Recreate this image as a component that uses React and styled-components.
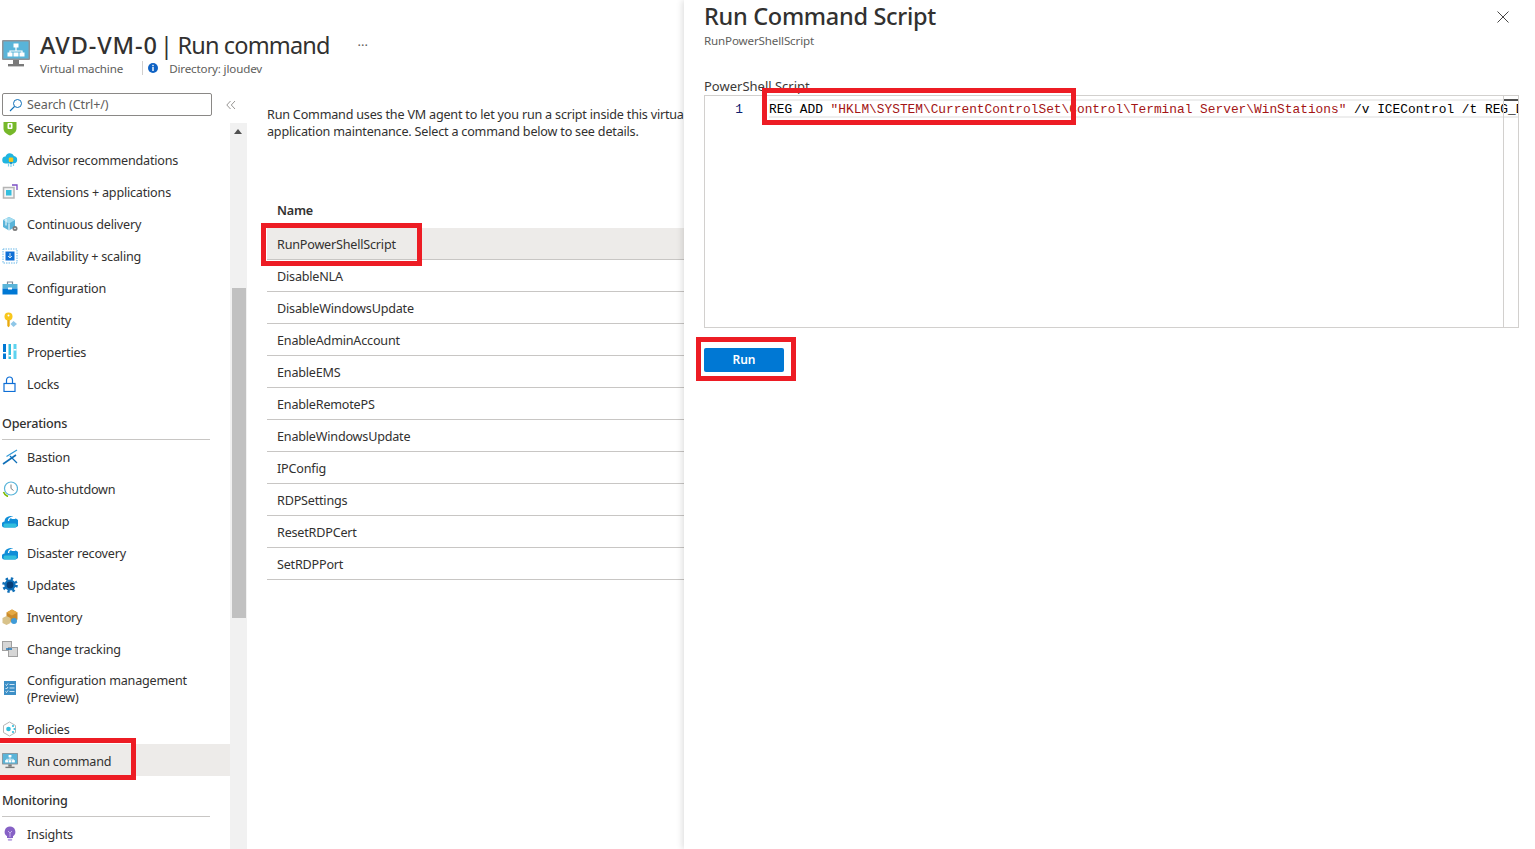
import React from "react";
import styled, { createGlobalStyle } from "styled-components";

const GlobalStyle = createGlobalStyle`
  html, body {
    margin: 0;
    padding: 0;
    background: #fff;
    font-family: "Noto Sans", "Open Sans", sans-serif;
    color: #323130;
  }
  * { box-sizing: border-box; }
`;

const VmIcon = ({ size = 28 }) => (
  <svg width={size} height={size} viewBox="0 0 28 28">
    <rect x="0" y="0" width="28" height="20" rx="1" fill="#8f9499" />
    <rect x="1.5" y="1.5" width="25" height="17" fill="#59b4d9" />
    <rect x="11" y="20" width="6" height="4" fill="#7a7a7a" />
    <rect x="6" y="24" width="16" height="2.4" fill="#7a7a7a" />
    <path d="M14 7v4M8 14v-3h12v3" fill="none" stroke="#fff" strokeWidth="1.2" />
    <rect x="11.5" y="3.5" width="5" height="4" fill="#fff" />
    <rect x="5.5" y="12.5" width="5" height="4" fill="#fff" />
    <rect x="11.5" y="12.5" width="5" height="4" fill="#fff" />
    <rect x="17.5" y="12.5" width="5" height="4" fill="#fff" />
  </svg>
);

const ShieldIcon = () => (
  <svg width="16" height="16" viewBox="0 0 16 16">
    <path d="M1.5 2h13v6.5c0 3.500-3 5.600-6.500 7-3.500-1.400-6.500-3.500-6.500-7z" fill="#76b82a" />
    <rect x="5.5" y="3" width="5" height="6" rx="1" fill="#fff" />
    <rect x="7.2" y="4.5" width="1.6" height="3" fill="#76b82a" />
  </svg>
);

const AdvisorIcon = () => (
  <svg width="16" height="16" viewBox="0 0 16 16">
    <path d="M4 11.500a3.500 3.500 0 0 1-.5-7 4.500 4.500 0 0 1 8.500-.5 3.800 3.800 0 0 1 0 7.500z" fill="#1fb5e0" />
    <rect x="6.8" y="5.500" width="4.400" height="4.400" rx="1" fill="#f8c71c" />
    <rect x="8" y="9.900" width="2" height="2" fill="#1f8fc0" />
    <path d="M6.500 12v2.500M9 12v3M11.500 12v2" stroke="#7fd0e8" strokeWidth="1.200" />
  </svg>
);

const ExtensionsIcon = () => (
  <svg width="16" height="16" viewBox="0 0 16 16">
    <rect x="1.5" y="3.500" width="10.500" height="10.500" fill="#f4f4f4" stroke="#b5b5b5" strokeWidth="1.500" />
    <rect x="4" y="6" width="5.500" height="5.500" fill="#32bedd" />
    <path d="M10 1h5v5" fill="none" stroke="#7a4dc4" strokeWidth="1.300" />
  </svg>
);

const DeliveryIcon = () => (
  <svg width="16" height="16" viewBox="0 0 16 16">
    <path d="M1 4l6-3 6 3v7l-6 3.500-6-3.500z" fill="#59b4d9" />
    <path d="M7 7.500L1 4l6-3 6 3z" fill="#a3dcf0" />
    <path d="M7 7.500v7M4 2.500v7" stroke="#fff" />
    <circle cx="13" cy="12.500" r="2.500" fill="#7a7a7a" />
    <circle cx="13" cy="12.500" r=".8" fill="#fff" />
  </svg>
);

const ScalingIcon = () => (
  <svg width="16" height="16" viewBox="0 0 16 16">
    <rect x="1" y="1" width="14" height="14" fill="#fff" stroke="#6bb8e8" strokeDasharray="1.500 1" />
    <rect x="3.500" y="3.500" width="9" height="9" fill="#0f6fd6" />
    <path d="M8 5v5M6 8l2 2 2-2" fill="none" stroke="#cfe6f5" strokeWidth="1" />
  </svg>
);

const ConfigIcon = () => (
  <svg width="16" height="16" viewBox="0 0 16 16">
    <path d="M5.500 4V2h5v2" fill="none" stroke="#7a8a99" strokeWidth="1.200" />
    <rect x="0.500" y="4" width="15" height="4.500" fill="#59b4d9" />
    <rect x="0.500" y="8.500" width="15" height="6" fill="#0078d4" />
    <rect x="6" y="7.500" width="4" height="2" fill="#fff" />
  </svg>
);

const IdentityIcon = () => (
  <svg width="16" height="16" viewBox="0 0 16 16">
    <circle cx="6.500" cy="4.500" r="4" fill="#f8c71c" />
    <circle cx="6.500" cy="3.500" r="1" fill="#fff" />
    <path d="M5.300 8h2.400v6l-1.200 1.200L5.300 14z" fill="#e8a90e" />
    <path d="M11.500 9l3.500 3-3.500 3-3-3z" fill="#8fc7e8" />
  </svg>
);

const PropertiesIcon = () => (
  <svg width="16" height="16" viewBox="0 0 16 16">
    <rect x="1" y="0" width="3" height="15" fill="#0078d4" />
    <rect x="6.500" y="0" width="2.500" height="15" fill="#32bedd" />
    <rect x="11.500" y="0" width="3" height="15" fill="#5ed3f0" />
    <rect x="1" y="8" width="3" height="1.500" fill="#fff" />
    <rect x="6.500" y="11" width="2.500" height="1.500" fill="#fff" />
    <rect x="11.500" y="5" width="3" height="1.500" fill="#fff" />
  </svg>
);

const LockIcon = () => (
  <svg width="16" height="16" viewBox="0 0 16 16">
    <rect x="2" y="7.500" width="11" height="8" fill="none" stroke="#0f6fd6" strokeWidth="1.200" />
    <path d="M4.500 7.500V4a3 3 0 0 1 6 0v3.500" fill="none" stroke="#0f6fd6" strokeWidth="1.200" />
  </svg>
);

const BastionIcon = () => (
  <svg width="16" height="16" viewBox="0 0 16 16">
    <path d="M1 15L14 6" stroke="#0f6fb8" strokeWidth="1.600" />
    <path d="M4.500 7.500L15 1" stroke="#2f9ad8" strokeWidth="1.200" />
    <path d="M8 7l7 7" stroke="#0f6fb8" strokeWidth="1.200" />
  </svg>
);

const ClockIcon = () => (
  <svg width="16" height="16" viewBox="0 0 16 16">
    <path d="M1.500 11A7.500 7.500 0 0 0 6 15.500" fill="none" stroke="#7fba00" strokeWidth="1.600" />
    <circle cx="9" cy="7.500" r="6.500" fill="#fff" stroke="#59b4d9" strokeWidth="1.200" />
    <path d="M9 3.500v4l2.500 2" fill="none" stroke="#7a7a7a" />
  </svg>
);

const BackupIcon = () => (
  <svg width="16" height="16" viewBox="0 0 16 16">
    <path d="M3 14.500a3 3 0 0 1-.5-6 5.500 5.500 0 0 1 10-3 4.500 4.500 0 0 1 .5 9z" fill="#0f8ed8" />
    <path d="M2.500 14.500a2.500 2.500 0 0 1 0-4h11a2.300 2.300 0 0 1 0 4z" fill="#32bedd" />
    <path d="M6.500 8a3.500 3.500 0 0 1 5.500-3" fill="none" stroke="#fff" strokeWidth="1.300" />
    <path d="M13 1.500v4.500H9z" fill="#fff" />
  </svg>
);

const UpdatesIcon = () => (
  <svg width="16" height="16" viewBox="0 0 16 16">
    <circle cx="8" cy="8" r="6.300" fill="none" stroke="#0f6fb8" strokeWidth="3" strokeDasharray="2.300 2.650" />
    <circle cx="8" cy="8" r="5.600" fill="#0f6fb8" />
    <circle cx="8" cy="8" r="3.400" fill="#083f78" />
  </svg>
);

const InventoryIcon = () => (
  <svg width="16" height="16" viewBox="0 0 16 16">
    <path d="M4.500 3.500L10 0.500l5.500 3v7L10 13.500l-5.500-3z" fill="#c98a2b" />
    <path d="M4.500 3.500L10 0.500l5.500 3L10 6.500z" fill="#e5a944" />
    <path d="M0.500 9l4-2 4 2v5l-4 2-4-2z" fill="#d8c28a" />
    <circle cx="12" cy="12" r="3" fill="#3f9bd8" />
  </svg>
);

const TrackingIcon = () => (
  <svg width="16" height="16" viewBox="0 0 16 16">
    <rect x="0.500" y="0.500" width="9" height="9" fill="#d6d6d6" stroke="#a0a0a0" />
    <rect x="6.500" y="6.500" width="9" height="9" fill="#d6d6d6" stroke="#a0a0a0" />
    <path d="M4 8h6" stroke="#0f6fb8" strokeWidth="1.400" />
  </svg>
);

const ManagementIcon = () => (
  <svg width="16" height="16" viewBox="0 0 16 16">
    <rect x="2" y="1" width="12" height="14" fill="#3d8fc6" />
    <path d="M7.500 4.500h5M7.500 8h5M7.500 11.500h5" stroke="#cfe6f5" />
    <path d="M3.500 4.500l1 1 1.500-2M3.500 8l1 1 1.500-2M3.500 11.500l1 1 1.500-2" stroke="#fff" fill="none" strokeWidth=".8" />
  </svg>
);

const PoliciesIcon = () => (
  <svg width="16" height="16" viewBox="0 0 16 16">
    <path d="M7.500 1l6 3.500v7l-6 3.500-6-3.500v-7z" fill="#fff" stroke="#b5b5b5" />
    <circle cx="6.500" cy="8" r="2.300" fill="#32bedd" />
    <circle cx="11" cy="5" r="1.100" fill="#32bedd" />
    <circle cx="12.500" cy="8" r="1.100" fill="#32bedd" />
    <circle cx="11" cy="11" r="1.100" fill="#32bedd" />
  </svg>
);

const InsightsIcon = () => (
  <svg width="16" height="16" viewBox="0 0 16 16">
    <path d="M8 .5a5.300 5.300 0 0 1 3 9.700V12H5v-1.800A5.300 5.300 0 0 1 8 .5z" fill="#8661c5" />
    <path d="M6 5l2 2 2-2M8 7v4" fill="none" stroke="#d9c8f5" strokeWidth=".8" />
    <rect x="5.800" y="12.800" width="4.400" height="2" rx=".8" fill="#b9a3e0" />
  </svg>
);

const SearchIcon = () => (
  <svg width="14" height="14" viewBox="0 0 14 14">
    <circle cx="8.500" cy="5.500" r="4" fill="none" stroke="#0f6fb8" />
    <path d="M5.500 8.500L1 13" stroke="#0f6fb8" strokeWidth="1.100" />
  </svg>
);

const CollapseIcon = () => (
  <svg width="10" height="10" viewBox="0 0 10 10">
    <path d="M4.500 1L.8 5l3.700 4M9 1L5.300 5 9 9" fill="none" stroke="#8a8886" strokeWidth=".9" />
  </svg>
);

const InfoIcon = () => (
  <svg width="12" height="12" viewBox="0 0 12 12">
    <circle cx="6" cy="6" r="5" fill="#0f62c4" />
    <rect x="5.300" y="5" width="1.400" height="4" fill="#fff" />
    <rect x="5.300" y="2.800" width="1.400" height="1.400" fill="#fff" />
  </svg>
);

const CloseIcon = () => (
  <svg width="12" height="12" viewBox="0 0 12 12">
    <path d="M.5.500l11 11M11.500.500l-11 11" stroke="#323130" strokeWidth=".9" fill="none" />
  </svg>
);

const topItems = [
  { label: "Security", Icon: ShieldIcon },
  { label: "Advisor recommendations", Icon: AdvisorIcon },
  { label: "Extensions + applications", Icon: ExtensionsIcon },
  { label: "Continuous delivery", Icon: DeliveryIcon },
  { label: "Availability + scaling", Icon: ScalingIcon },
  { label: "Configuration", Icon: ConfigIcon },
  { label: "Identity", Icon: IdentityIcon },
  { label: "Properties", Icon: PropertiesIcon },
  { label: "Locks", Icon: LockIcon },
];

const operationItems = [
  { label: "Bastion", Icon: BastionIcon },
  { label: "Auto-shutdown", Icon: ClockIcon },
  { label: "Backup", Icon: BackupIcon },
  { label: "Disaster recovery", Icon: BackupIcon },
  { label: "Updates", Icon: UpdatesIcon },
  { label: "Inventory", Icon: InventoryIcon },
  { label: "Change tracking", Icon: TrackingIcon },
  { label: "Configuration management (Preview)", Icon: ManagementIcon, tall: true },
  { label: "Policies", Icon: PoliciesIcon, low: true },
  { label: "Run command", Icon: () => <VmIcon size={16} />, active: true, low: true },
];

const commands = [
  "RunPowerShellScript",
  "DisableNLA",
  "DisableWindowsUpdate",
  "EnableAdminAccount",
  "EnableEMS",
  "EnableRemotePS",
  "EnableWindowsUpdate",
  "IPConfig",
  "RDPSettings",
  "ResetRDPCert",
  "SetRDPPort",
];

const App = () => {
  return (
    <Page>
      <GlobalStyle />
      <BladeHeader>
        <HeaderIcon>
          <VmIcon />
        </HeaderIcon>
        <HeaderText>
          <TitleRow>
            <Title>
              <strong>AVD-VM-0</strong> | Run command
            </Title>
            <Ellipsis>···</Ellipsis>
          </TitleRow>
          <SubRow>
            <span>Virtual machine</span>
            <SubDivider />
            <InfoIcon />
            <span>Directory: jloudev</span>
          </SubRow>
        </HeaderText>
      </BladeHeader>

      <BladeBody>
        <Sidebar>
          <SearchRow>
            <SearchBox>
              <SearchIcon />
              <span>Search (Ctrl+/)</span>
            </SearchBox>
            <CollapseButton>
              <CollapseIcon />
            </CollapseButton>
          </SearchRow>
          <SidebarBody>
            <NavList>
              <NavInner>
                {topItems.map(({ label, Icon }) => (
                  <NavItem key={label}>
                    <NavIcon>
                      <Icon />
                    </NavIcon>
                    <NavLabel>{label}</NavLabel>
                  </NavItem>
                ))}
                <SectionTitle>Operations</SectionTitle>
                {operationItems.map(({ label, Icon, tall, active, low }) => (
                  <NavItem key={label} $tall={tall} $active={active} $low={low}>
                    <NavIcon>
                      <Icon />
                    </NavIcon>
                    <NavLabel>{label}</NavLabel>
                    {active && <RunCommandMark />}
                  </NavItem>
                ))}
                <SectionTitle $wide>Monitoring</SectionTitle>
                <NavItem>
                  <NavIcon>
                    <InsightsIcon />
                  </NavIcon>
                  <NavLabel>Insights</NavLabel>
                </NavItem>
              </NavInner>
            </NavList>
            <ScrollTrack>
              <ScrollArrow />
              <ScrollThumb />
            </ScrollTrack>
          </SidebarBody>
        </Sidebar>

        <Content>
          <Description>
            <p>
              Run Command uses the VM agent to let you run a script inside this virtual machine to
              troubleshoot and
            </p>
            <p>application maintenance. Select a command below to see details.</p>
          </Description>
          <CommandTable>
            <TableHead>Name</TableHead>
            {commands.map((name, i) => (
              <CommandRow key={name} $selected={i === 0}>
                {name}
                {i === 0 && <CommandMark />}
              </CommandRow>
            ))}
          </CommandTable>
        </Content>
      </BladeBody>

      <Drawer>
        <DrawerHeader>
          <div>
            <DrawerTitle>Run Command Script</DrawerTitle>
            <DrawerSubtitle>RunPowerShellScript</DrawerSubtitle>
          </div>
          <CloseButton>
            <CloseIcon />
          </CloseButton>
        </DrawerHeader>
        <FieldLabel>PowerShell Script</FieldLabel>
        <Editor>
          <Gutter>1</Gutter>
          <CodeArea>
            <CodeLine>
              REG ADD <Str>"HKLM\SYSTEM\CurrentControlSet\Control\Terminal Server\WinStations"</Str>{" "}
              /v ICEControl /t REG_DWORD
            </CodeLine>
            <ScriptMark />
          </CodeArea>
          <Minimap>
            <MinimapLine />
          </Minimap>
        </Editor>
        <RunRow>
          <RunButton>Run</RunButton>
          <RunMark />
        </RunRow>
      </Drawer>
    </Page>
  );
};

const Page = styled.div`
  position: relative;
  width: 1535px;
  height: 849px;
  overflow: hidden;
  background: #fff;
`;

const BladeHeader = styled.header`
  display: flex;
  height: 93px;
  padding: 30px 0 0 2px;
  gap: 10px;
`;

const HeaderIcon = styled.div`
  padding-top: 10px;
  line-height: 0;
`;

const HeaderText = styled.div`
  display: flex;
  flex-direction: column;
`;

const TitleRow = styled.div`
  display: flex;
  align-items: center;
  height: 30px;
`;

const Title = styled.h1`
  margin: 0;
  font-size: 23.5px;
  font-weight: 400;
  letter-spacing: -0.85px;
  color: #323130;
  white-space: nowrap;

  strong {
    margin-right: -3px;
    font-weight: 500;
    letter-spacing: 0.9px;
  }
`;

const Ellipsis = styled.span`
  margin-left: 28px;
  font-size: 13px;
  color: #605e5c;
`;

const SubRow = styled.div`
  display: flex;
  align-items: center;
  height: 18px;
  margin-top: -1px;
  font-size: 11.6px;
  color: #605e5c;
  letter-spacing: -0.15px;
  white-space: nowrap;

  svg {
    margin: 0 10px 0 0;
  }
`;

const SubDivider = styled.i`
  width: 1px;
  height: 14px;
  margin: 0 4px 0 19px;
  background: #d2d0ce;
`;

const BladeBody = styled.div`
  display: flex;
  height: 756px;
`;

const Sidebar = styled.aside`
  display: flex;
  flex-direction: column;
  flex: none;
  width: 247px;
`;

const SearchRow = styled.div`
  display: flex;
  align-items: flex-start;
  flex: none;
  height: 27px;
  padding-left: 2px;
`;

const SearchBox = styled.div`
  display: flex;
  flex: none;
  align-items: center;
  gap: 4px;
  width: 210px;
  height: 23px;
  padding-left: 6px;
  border: 1px solid #8a8886;
  border-radius: 2px;
  font-size: 12.5px;
  letter-spacing: -0.1px;
  color: #605e5c;
`;

const CollapseButton = styled.div`
  display: flex;
  flex: none;
  align-items: center;
  justify-content: center;
  width: 38px;
  height: 23px;
`;

const SidebarBody = styled.div`
  display: flex;
  flex: 1;
  min-height: 0;
`;

const NavList = styled.nav`
  flex: none;
  width: 230px;
  overflow: hidden;
`;

const NavInner = styled.div`
  margin-top: -8px;
`;

const NavItem = styled.div`
  position: relative;
  display: flex;
  align-items: center;
  gap: 9px;
  height: ${(p) => (p.$tall ? "47px" : "32px")};
  padding: ${(p) => (p.$low ? "3px" : "1px")} 0 0 2px;
  background: ${(p) => (p.$active ? "#edebe9" : "transparent")};
`;

const NavIcon = styled.span`
  display: flex;
  flex: none;
  width: 16px;
  height: 16px;
  margin-top: -2px;
`;

const NavLabel = styled.span`
  font-size: 12.6px;
  line-height: 17px;
  letter-spacing: -0.2px;
  color: #323130;
`;

const SectionTitle = styled.div`
  display: flex;
  align-items: flex-end;
  width: 208px;
  height: ${(p) => (p.$wide ? "41px" : "40px")};
  margin: 0 0 1px 2px;
  padding-bottom: 7px;
  border-bottom: 1px solid #c8c6c4;
  font-size: 12.6px;
  font-weight: 500;
  letter-spacing: -0.2px;
  color: #323130;
`;

const ScrollTrack = styled.div`
  flex: none;
  width: 17px;
  margin-top: 3px;
  padding: 0 1px;
  background: #f1f1f1;
`;

const ScrollArrow = styled.div`
  width: 0;
  height: 0;
  margin: 6px 0 0 3px;
  border-left: 4px solid transparent;
  border-right: 4px solid transparent;
  border-bottom: 5px solid #505050;
`;

const ScrollThumb = styled.div`
  width: 14px;
  height: 330px;
  margin: 154px 0 0 1px;
  background: #c1c1c1;
`;

const Content = styled.main`
  flex: 1;
  min-width: 0;
  padding: 13px 0 0 20px;
  overflow: hidden;
`;

const Description = styled.div`
  width: 900px;
  height: 84px;
  font-size: 12.6px;
  line-height: 17px;
  letter-spacing: -0.2px;
  color: #323130;

  p {
    margin: 0;
  }
`;

const CommandTable = styled.div`
  width: 417px;
`;

const TableHead = styled.div`
  height: 38px;
  padding: 12px 0 0 10px;
  font-size: 12.6px;
  font-weight: 600;
  letter-spacing: -0.2px;
  line-height: 17px;
`;

const CommandRow = styled.div`
  position: relative;
  display: flex;
  align-items: center;
  height: 32px;
  padding: 2px 0 0 10px;
  border-bottom: 1px solid #c8c6c4;
  background: ${(p) => (p.$selected ? "#edebe9" : "transparent")};
  font-size: 12.6px;
  letter-spacing: -0.2px;
  color: #323130;
`;

const Mark = styled.i`
  position: absolute;
  border: 5px solid #ed1c24;
  pointer-events: none;
`;

const RunCommandMark = styled(Mark)`
  left: -5px;
  top: -6px;
  width: 141px;
  height: 42px;
`;

const CommandMark = styled(Mark)`
  left: -6px;
  top: -5px;
  width: 161px;
  height: 43px;
`;

const ScriptMark = styled(Mark)`
  left: -7px;
  top: -8px;
  width: 314px;
  height: 37px;
`;

const RunMark = styled(Mark)`
  left: -8px;
  top: -11px;
  width: 100px;
  height: 44px;
`;

const Drawer = styled.section`
  position: absolute;
  top: 0;
  right: 0;
  bottom: 0;
  left: 684px;
  padding: 0 16px 0 20px;
  background: #fff;
  box-shadow: -2px 0 6px rgba(0, 0, 0, 0.12);
`;

const DrawerHeader = styled.div`
  display: flex;
  justify-content: space-between;
  height: 78px;
`;

const DrawerTitle = styled.h2`
  margin: 0;
  font-size: 23.5px;
  line-height: 32px;
  font-weight: 500;
  letter-spacing: -0.3px;
  color: #323130;
  white-space: nowrap;
`;

const DrawerSubtitle = styled.div`
  margin-top: 1px;
  font-size: 11.6px;
  line-height: 16px;
  letter-spacing: -0.15px;
  color: #605e5c;
`;

const CloseButton = styled.div`
  padding: 11px 10px 0 0;
  line-height: 0;
`;

const FieldLabel = styled.div`
  height: 17px;
  font-size: 13px;
  line-height: 17px;
  color: #3b3a39;
`;

const Editor = styled.div`
  position: relative;
  display: flex;
  width: 815px;
  height: 233px;
  border: 1px solid #d2d0ce;
`;

const Gutter = styled.div`
  flex: none;
  width: 64px;
  padding: 5px 26px 0 0;
  text-align: right;
  font-family: "Liberation Mono", monospace;
  font-size: 12.83px;
  line-height: 17px;
  color: #0b216f;
`;

const CodeArea = styled.div`
  position: relative;
  flex: none;
  width: 749px;
`;

const CodeLine = styled.div`
  height: 19px;
  margin-top: 3px;
  padding-top: 2px;
  border-top: 2px solid #eeeeee;
  border-bottom: 2px solid #eeeeee;
  overflow: hidden;
  white-space: pre;
  font-family: "Liberation Mono", monospace;
  font-size: 12.83px;
  line-height: 14px;
  color: #000;
`;

const Str = styled.span`
  color: #a31515;
`;

const Minimap = styled.div`
  position: absolute;
  top: 0;
  right: 0;
  bottom: 0;
  width: 15px;
  padding-top: 3px;
  border-left: 1px solid #d2d0ce;
`;

const MinimapLine = styled.div`
  height: 2px;
  background: #505050;
`;

const RunRow = styled.div`
  position: relative;
  width: 80px;
  margin-top: 20px;
`;

const RunButton = styled.button`
  display: block;
  width: 80px;
  height: 24px;
  padding: 0 0 2px;
  border: none;
  border-radius: 2px;
  background: #0078d4;
  color: #fff;
  font-family: inherit;
  font-size: 12px;
  font-weight: 600;
`;

export default App;
